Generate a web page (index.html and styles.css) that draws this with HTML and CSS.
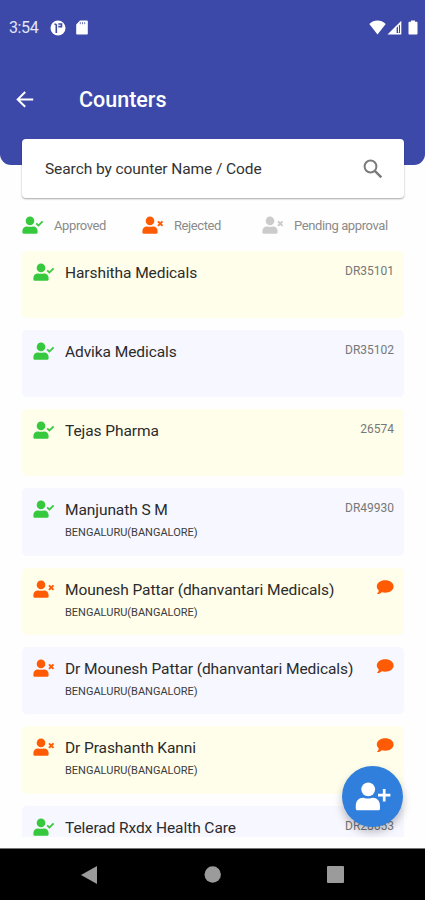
FILE: index.html
```html
<!DOCTYPE html>
<html lang="en">

<head>
    <meta charset="UTF-8">
    <meta name="viewport" content="width=device-width, initial-scale=1.0">
    <title>Counters</title>
    <link rel="stylesheet" href="styles.css">
</head>

<body>
    <!-- Shared icons -->
    <svg class="icon-defs" width="0" height="0">
        <symbol id="user" viewBox="0 0 22 18">
            <circle cx="8" cy="4.9" r="4.3" />
            <path d="M.4 16.6v-1.5c0-2.8 1.8-4.7 4.6-4.7.9 0 1.5.4 3 .4s2.100-.4 3-.4c2.800 0 4.600 1.900 4.600 4.700v1.500c0 .7-.5 1.100-1.100 1.100h-13c-.7 0-1.100-.4-1.100-1.100z" />
        </symbol>
        <symbol id="user-check" viewBox="0 0 22 18">
            <use href="#user" width="22" height="18" />
            <path d="M14.200 7.400l2.200 2.200 4.200-4.200" fill="none" stroke="currentColor" stroke-width="1.800" />
        </symbol>
        <symbol id="user-times" viewBox="0 0 22 18">
            <use href="#user" width="22" height="18" />
            <path d="M16 5.400l4.500 4.500M20.500 5.400L16 9.900" fill="none" stroke="currentColor" stroke-width="2" />
        </symbol>
        <symbol id="comment" viewBox="0 0 18 15">
            <path d="M9.200.3c4.700 0 8.400 2.700 8.400 6.200s-3.700 6.200-8.400 6.200c-1.200 0-2.300-.2-3.300-.5-1 .8-2.300 1.800-4.500 1.900-.3 0-.4-.3-.2-.5.900-1 1.500-2.100 1.600-3.200C1.500 9.300.8 8 .8 6.500.8 3 4.500.3 9.200.3z" />
        </symbol>
    </svg>

    <header class="header">
        <div class="status-bar">
            <span class="time">3:54</span>
            <svg class="status-app" width="16" height="16" viewBox="0 0 16 16">
                <circle cx="8" cy="8" r="7.500" fill="#fff" />
                <path d="M6.300 13V4.300M6.300 4.200H4.500M8.300 4h3.200v2.600H8.300" fill="none" stroke="#3d49a9" stroke-width="1.600" />
            </svg>
            <svg class="status-sd" width="12" height="15" viewBox="0 0 12 15">
                <path d="M4 .5h6.800c.6 0 1 .4 1 1v12c0 .6-.4 1-1 1H1.200c-.6 0-1-.4-1-1V4.500z" fill="#fff" />
                <path d="M4.300 2.200v2M6.500 2.200v2M8.700 2.200v2" stroke="#3d49a9" stroke-width=".8" />
            </svg>
            <div class="status-right">
                <svg width="17" height="15" viewBox="0 0 17 15">
                    <path d="M.3 3.900C5-.6 12-.6 16.700 3.900L8.500 14.500z" fill="#fff" />
                </svg>
                <svg width="15" height="15" viewBox="0 0 15 15">
                    <path d="M.5 14.500L14.300.7v13.800z" fill="#fff" />
                    <path d="M9.600 7.800L13 4.500v8.500H9.600z" fill="#3d49a9" />
                    <path d="M11.500 6.200v6.500" stroke="#fff" stroke-width="1" />
                </svg>
                <svg class="battery" width="10" height="15" viewBox="0 0 10 15">
                    <path d="M3 .5h4v1.300h1.500c.6 0 1 .4 1 1v10.700c0 .6-.4 1-1 1h-7c-.6 0-1-.4-1-1V2.800c0-.6.4-1 1-1H3z" fill="#fff" />
                </svg>
            </div>
        </div>
        <div class="title-bar">
            <svg width="18" height="18" viewBox="0 0 18 18">
                <path d="M17.200 8.400H2M9.200 1L1.700 8.400l7.500 7.400" fill="none" stroke="#fff" stroke-width="2" />
            </svg>
            <h1>Counters</h1>
        </div>
    </header>

    <main>
        <div class="search">
            <span>Search by counter Name / Code</span>
            <svg width="20" height="20" viewBox="0 0 20 20" fill="none" stroke="#7b7b7b">
                <circle cx="7.500" cy="7.500" r="5.900" stroke-width="2" />
                <path d="M11.800 11.800l6.500 6.500" stroke-width="2.500" />
            </svg>
        </div>

        <div class="legend">
            <div class="legend-item">
                <svg class="icon approved"><use href="#user-check" /></svg>
                <span>Approved</span>
            </div>
            <div class="legend-item">
                <svg class="icon rejected"><use href="#user-times" /></svg>
                <span>Rejected</span>
            </div>
            <div class="legend-item">
                <svg class="icon pending"><use href="#user-times" /></svg>
                <span>Pending approval</span>
            </div>
        </div>

        <div class="list">
            <div class="card">
                <svg class="icon approved"><use href="#user-check" /></svg>
                <div class="info">
                    <p class="name">Harshitha Medicals</p>
                </div>
                <span class="code">DR35101</span>
            </div>
            <div class="card">
                <svg class="icon approved"><use href="#user-check" /></svg>
                <div class="info">
                    <p class="name">Advika Medicals</p>
                </div>
                <span class="code">DR35102</span>
            </div>
            <div class="card">
                <svg class="icon approved"><use href="#user-check" /></svg>
                <div class="info">
                    <p class="name">Tejas Pharma</p>
                </div>
                <span class="code">26574</span>
            </div>
            <div class="card">
                <svg class="icon approved"><use href="#user-check" /></svg>
                <div class="info">
                    <p class="name">Manjunath S M</p>
                    <p class="city">BENGALURU(BANGALORE)</p>
                </div>
                <span class="code">DR49930</span>
            </div>
            <div class="card">
                <svg class="icon rejected"><use href="#user-times" /></svg>
                <div class="info">
                    <p class="name">Mounesh Pattar (dhanvantari Medicals)</p>
                    <p class="city">BENGALURU(BANGALORE)</p>
                </div>
                <svg class="comment"><use href="#comment" /></svg>
            </div>
            <div class="card">
                <svg class="icon rejected"><use href="#user-times" /></svg>
                <div class="info">
                    <p class="name">Dr Mounesh Pattar (dhanvantari Medicals)</p>
                    <p class="city">BENGALURU(BANGALORE)</p>
                </div>
                <svg class="comment"><use href="#comment" /></svg>
            </div>
            <div class="card">
                <svg class="icon rejected"><use href="#user-times" /></svg>
                <div class="info">
                    <p class="name">Dr Prashanth Kanni</p>
                    <p class="city">BENGALURU(BANGALORE)</p>
                </div>
                <svg class="comment"><use href="#comment" /></svg>
            </div>
            <div class="card">
                <svg class="icon approved"><use href="#user-check" /></svg>
                <div class="info">
                    <p class="name">Telerad Rxdx Health Care</p>
                </div>
                <span class="code">DR28653</span>
            </div>
        </div>
    </main>

    <!-- Floating add button -->
    <div class="fab">
        <svg width="36" height="30" viewBox="0 0 36 30" fill="#fff">
            <circle cx="13.200" cy="7.300" r="6.900" />
            <path d="M.8 26.400v-2.600c0-4.800 2.900-8 7.300-8 1.500 0 2.600.8 4.800.8s3.300-.8 4.800-.8c4.400 0 7.300 3.200 7.300 8v2.600c0 1.200-.8 1.900-1.900 1.900H2.700c-1.100 0-1.900-.7-1.900-1.900z" />
            <path d="M29.200 7v12.400M23 13.200h12.400" stroke="#fff" stroke-width="2.700" />
        </svg>
    </div>

    <footer class="nav-bar">
        <svg width="17" height="18" viewBox="0 0 17 18"><path d="M16 0v18L0 9z" /></svg>
        <svg width="17" height="17" viewBox="0 0 17 17"><circle cx="8.700" cy="8.500" r="8.200" /></svg>
        <svg width="17" height="17" viewBox="0 0 17 17"><rect width="17" height="17" rx="1" /></svg>
    </footer>
</body>

</html>
```
FILE: styles.css
```css
body {
    font-family: Roboto, sans-serif;
    margin: 0;
    height: 900px;
    display: flex;
    flex-direction: column;
    position: relative;
    overflow: hidden;
    background-color: #fefefe;
}

h1,
p {
    margin: 0;
    font-weight: 400;
}

svg {
    flex: none;
    display: block;
}

.icon-defs {
    position: absolute;
}

.header {
    height: 165px;
    flex: none;
    background-color: #3d49a9;
    color: white;
    border-radius: 0 0 11px 11px;
}

.status-bar {
    display: flex;
    align-items: center;
    height: 15px;
    padding: 20px 7px 0 9px;
}

.time {
    width: 41px;
    font-size: 16px;
    letter-spacing: -0.4px;
    color: #e3e6f8;
}

.status-sd {
    margin-left: 10px;
}

.status-right {
    display: flex;
    margin-left: auto;
    gap: 1px;
}

.battery {
    margin-left: 5px;
}

.title-bar {
    display: flex;
    align-items: center;
    gap: 45px;
    padding: 50px 0 0 16px;
}

.title-bar h1 {
    font-size: 21.5px;
    line-height: 30px;
    font-weight: 500;
}

main {
    flex: none;
    height: 699px;
    margin: -26px 21px 0 22px;
}

.search {
    display: flex;
    align-items: center;
    justify-content: space-between;
    height: 59px;
    padding: 0 21px 0 23px;
    background-color: white;
    border-radius: 4px;
    box-shadow: 0 1px 2px rgba(0, 0, 0, 0.35);
    font-size: 15.5px;
    letter-spacing: -0.08px;
    color: #333;
}

.legend {
    display: flex;
    margin-top: 18px;
    height: 18px;
    font-size: 13px;
    letter-spacing: -0.4px;
    color: #8b8b8b;
}

.legend-item {
    display: flex;
    align-items: center;
    gap: 10px;
    width: 120px;
    flex: none;
    white-space: nowrap;
}

.icon {
    width: 22px;
    height: 18px;
    fill: currentColor;
}

.legend .icon {
    margin-top: -1px;
}

.approved {
    color: #36c93d;
}

.rejected {
    color: #ff5b05;
}

.pending {
    color: #cbcbcb;
}

.list {
    display: flex;
    flex-direction: column;
    gap: 12px;
    height: 586px;
    margin-top: 16.6px;
    overflow: hidden;
}

.card {
    display: flex;
    align-items: flex-start;
    flex: none;
    box-sizing: border-box;
    height: 67.3px;
    padding: 12px 10px 0 11px;
    border-radius: 5px;
    background-color: #fffeea;
}

.card:nth-child(even) {
    background-color: #f6f7ff;
}

.info {
    flex: 1;
    margin-left: 10px;
    white-space: nowrap;
}

.name {
    font-size: 15.5px;
    line-height: 20px;
    letter-spacing: -0.08px;
    color: #2b2b2b;
}

.city {
    margin-top: 5px;
    font-size: 11px;
    line-height: 16px;
    color: #3c3c3c;
}

.code {
    font-size: 12px;
    line-height: 16px;
    color: #777;
}

.comment {
    width: 18px;
    height: 15px;
    fill: #ff5b05;
}

.fab {
    position: absolute;
    left: 342px;
    top: 766px;
    width: 61px;
    height: 61px;
    display: flex;
    align-items: center;
    justify-content: center;
    border-radius: 50%;
    background-color: #307fdc;
    box-shadow: 0 5px 8px rgba(0, 0, 0, 0.25);
}

.nav-bar {
    display: flex;
    align-items: center;
    flex: none;
    gap: 106px;
    height: 52px;
    box-sizing: border-box;
    margin-top: 10px;
    padding-left: 81px;
    border-top: 1px solid #777;
    background-color: black;
    fill: #9b9b9b;
}
```
